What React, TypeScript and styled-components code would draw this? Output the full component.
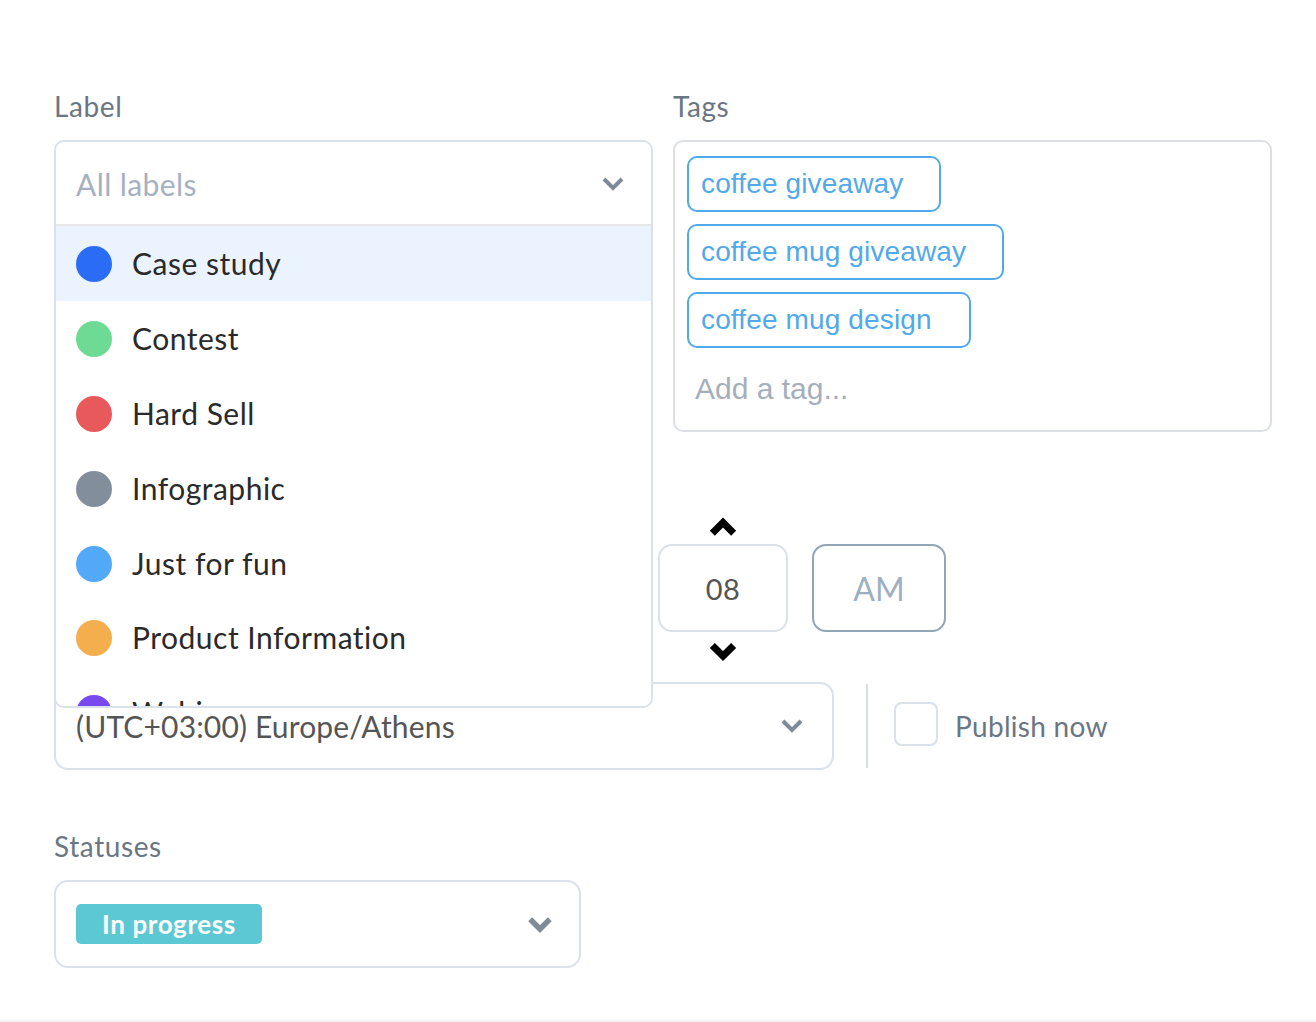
import React from 'react';
import styled, { createGlobalStyle } from 'styled-components';

const GlobalStyle = createGlobalStyle`
  html, body {
    margin: 0;
    padding: 0;
    background: #fff;
    font-family: Lato, "Noto Sans", sans-serif;
  }
  * {
    box-sizing: border-box;
  }
`;

const Page = styled.div`
  width: 1316px;
  height: 1022px;
  padding: 90px 44px 0 54px;
  position: relative;
  overflow: hidden;
`;

const TopRow = styled.div`
  display: grid;
  grid-template-columns: 599px 599px;
  column-gap: 20px;
`;

const Field = styled.div`
  position: relative;
  display: flex;
  flex-direction: column;
`;

const FieldLabel = styled.label`
  display: block;
  height: 50px;
  line-height: 33px;
  font-size: 28px;
  letter-spacing: 0.6px;
  color: #6b7683;
`;

const LabelSelect = styled.div`
  position: absolute;
  z-index: 2;
  top: 50px;
  left: 0;
  width: 599px;
  height: 568px;
  background: #fff;
  border: 2px solid #dbe1ea;
  border-radius: 10px;
  overflow: hidden;
`;

const SelectHeader = styled.div`
  height: 84px;
  display: flex;
  align-items: center;
  justify-content: space-between;
  padding: 2px 27px 0 20px;
  border-bottom: 2px solid #e6e8ec;
  font-size: 30px;
  letter-spacing: 0.4px;
  color: #a6b1c0;
`;

const Option = styled.div<{ $active?: boolean }>`
  height: 74.8px;
  display: flex;
  align-items: center;
  gap: 20px;
  padding-left: 20px;
  background: ${p => (p.$active ? '#ebf4fe' : '#fff')};
  font-size: 30px;
  letter-spacing: 0.5px;
  color: #2a2a2a;
`;

const Dot = styled.span<{ $color: string }>`
  width: 36px;
  height: 36px;
  margin-top: 2px;
  flex: none;
  border-radius: 50%;
  background: ${p => p.$color};
`;

const TagsBox = styled.div`
  height: 292px;
  border: 2px solid #dce0e5;
  border-radius: 10px;
  padding: 14px 12px;
  display: flex;
  flex-direction: column;
  align-items: flex-start;
  gap: 12px;
`;

const Tag = styled.span<{ $width: number }>`
  width: ${p => p.$width}px;
  height: 56px;
  padding-left: 12px;
  border: 2px solid #52a9ea;
  border-radius: 10px;
  font-family: "Liberation Sans", Arial, sans-serif;
  font-size: 28px;
  letter-spacing: 0.14px;
  line-height: 51px;
  color: #52a9ea;
  white-space: nowrap;
`;

const TagPlaceholder = styled.span`
  margin: 7px 0 0 8px;
  font-family: "Liberation Sans", Arial, sans-serif;
  font-size: 30px;
  line-height: 44px;
  color: #a5aebb;
`;

const TimeRow = styled.div`
  display: flex;
  align-items: flex-start;
  gap: 24px;
  margin-top: 87px;
  padding-left: 604px;
`;

const Stepper = styled.div`
  display: flex;
  flex-direction: column;
  align-items: center;
`;

const StepButton = styled.div<{ $down?: boolean }>`
  display: flex;
  margin: ${p => (p.$down ? '11px 0 0' : '0 0 8px')};
`;

const TimeBox = styled.div`
  width: 130px;
  height: 88px;
  display: flex;
  align-items: center;
  justify-content: center;
  padding-top: 2px;
  border: 2px solid #dbe1ea;
  border-radius: 14px;
  font-size: 29px;
  letter-spacing: 0.5px;
  color: #555;
`;

const MeridiemBox = styled.div`
  width: 134px;
  height: 88px;
  margin-top: 25px;
  display: flex;
  align-items: center;
  justify-content: center;
  border: 2px solid #92a5b8;
  border-radius: 14px;
  font-size: 32px;
  color: #9dafc0;
`;

const ZoneRow = styled.div`
  display: flex;
  align-items: center;
  margin-top: 23px;
`;

const SelectBox = styled.div<{ $width: number; $pad?: number }>`
  width: ${p => p.$width}px;
  height: 88px;
  display: flex;
  align-items: center;
  justify-content: space-between;
  padding: 0 ${p => p.$pad ?? 29}px 0 20px;
  border: 2px solid #dbe1ea;
  border-radius: 14px;
`;

const ZoneText = styled.span`
  font-size: 30px;
  letter-spacing: 0.16px;
  color: #555;
`;

const Divider = styled.div`
  width: 2px;
  height: 84px;
  margin: 0 26px 0 32px;
  background: #d7dee7;
`;

const Checkbox = styled.div`
  width: 44px;
  height: 44px;
  margin-bottom: 4px;
  border: 2px solid #dbe1ea;
  border-radius: 8px;
`;

const PublishLabel = styled.span`
  margin-left: 17px;
  font-size: 28px;
  letter-spacing: 0.3px;
  color: #6b7683;
`;

const StatusField = styled.div`
  margin-top: 60px;
`;

const Badge = styled.span`
  width: 186px;
  height: 40px;
  display: flex;
  align-items: center;
  justify-content: center;
  border-radius: 5px;
  background: #5cc8d3;
  font-size: 26px;
  font-weight: 700;
  letter-spacing: 0.6px;
  color: #fff;
`;

const Footer = styled.div`
  position: absolute;
  left: 0;
  right: 0;
  bottom: 0;
  height: 2px;
  background: #f3f4f6;
`;

const Chevron: React.FC<{ color?: string; up?: boolean; size?: number; weight?: number }> = ({
  color = '#7f8b99',
  up = false,
  size = 22,
  weight = 4,
}) => (
  <svg width={size} height={size * 0.64} viewBox="0 0 22 14" fill="none" overflow="visible">
    <polyline
      points={up ? '2,12 11,3 20,12' : '2,2 11,11 20,2'}
      stroke={color}
      strokeWidth={weight}
    />
  </svg>
);

const labels = [
  { name: 'Case study', color: '#2b6cf6' },
  { name: 'Contest', color: '#6ddb94' },
  { name: 'Hard Sell', color: '#e8595c' },
  { name: 'Infographic', color: '#838e9d' },
  { name: 'Just for fun', color: '#52a9f8' },
  { name: 'Product Information', color: '#f5ae4e' },
  { name: 'Webinar', color: '#7849ee' },
];

const tags = [
  { name: 'coffee giveaway', width: 254 },
  { name: 'coffee mug giveaway', width: 317 },
  { name: 'coffee mug design', width: 284 },
];

export default function App() {
  return (
    <Page>
      <GlobalStyle />
      <TopRow>
        <Field>
          <FieldLabel>Label</FieldLabel>
          <LabelSelect>
            <SelectHeader>
              All labels
              <Chevron />
            </SelectHeader>
            {labels.map((label, i) => (
              <Option key={label.name} $active={i === 0}>
                <Dot $color={label.color} />
                {label.name}
              </Option>
            ))}
          </LabelSelect>
        </Field>
        <Field>
          <FieldLabel>Tags</FieldLabel>
          <TagsBox>
            {tags.map(tag => (
              <Tag key={tag.name} $width={tag.width}>
                {tag.name}
              </Tag>
            ))}
            <TagPlaceholder>Add a tag...</TagPlaceholder>
          </TagsBox>
        </Field>
      </TopRow>

      <TimeRow>
        <Stepper>
          <StepButton>
            <Chevron color="#000" up size={26} weight={6} />
          </StepButton>
          <TimeBox>08</TimeBox>
          <StepButton $down>
            <Chevron color="#000" size={26} weight={6} />
          </StepButton>
        </Stepper>
        <MeridiemBox>AM</MeridiemBox>
      </TimeRow>

      <ZoneRow>
        <SelectBox $width={780}>
          <ZoneText>(UTC+03:00) Europe/Athens</ZoneText>
          <Chevron />
        </SelectBox>
        <Divider />
        <Checkbox />
        <PublishLabel>Publish now</PublishLabel>
      </ZoneRow>

      <StatusField>
        <FieldLabel>Statuses</FieldLabel>
        <SelectBox $width={527} $pad={27}>
          <Badge>In progress</Badge>
          <Chevron size={24} weight={5} />
        </SelectBox>
      </StatusField>
      <Footer />
    </Page>
  );
}
